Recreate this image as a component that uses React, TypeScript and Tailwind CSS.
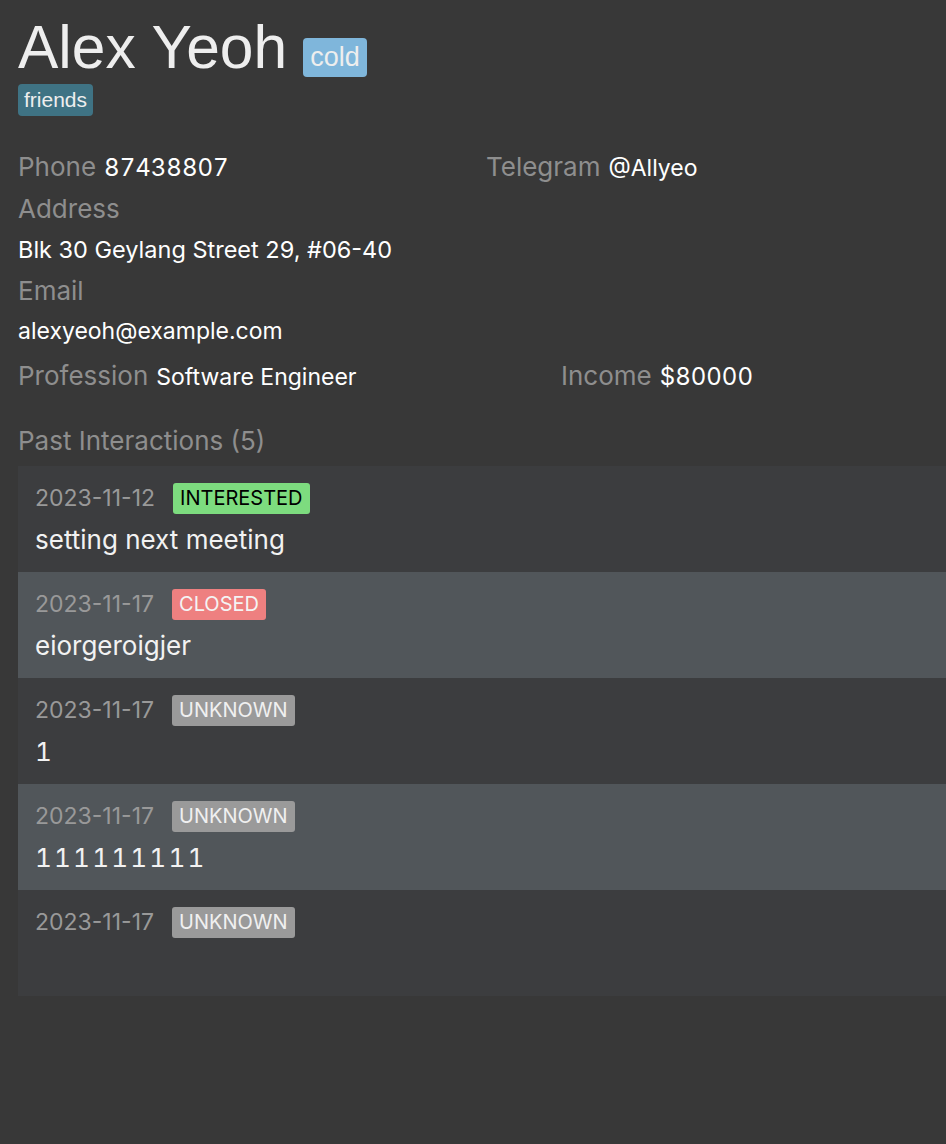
import React from "react";

const interactions = [
  { date: "2023-11-12", status: "INTERESTED", note: "setting next meeting" },
  { date: "2023-11-17", status: "CLOSED", note: "eiorgeroigjer" },
  { date: "2023-11-17", status: "UNKNOWN", note: "1" },
  { date: "2023-11-17", status: "UNKNOWN", note: "111111111" },
  { date: "2023-11-17", status: "UNKNOWN", note: "" },
];

const badgeStyle: Record<string, string> = {
  INTERESTED: "bg-[#7ddc7f] text-black",
  CLOSED: "bg-[#ee8080] text-[#f4f4f4]",
  UNKNOWN: "bg-[#9a9a9a] text-[#f0f0f0]",
};

export default function App() {
  return (
    <div className="min-h-[1144px] w-[946px] overflow-hidden bg-[#383838] font-['Inter',sans-serif]">
      <div className="pl-[18px] pt-[14px]">
        <div className="flex items-end gap-[16px] h-[66px]">
          <h1 className="font-['Liberation_Sans',Arial,sans-serif] text-[60.5px] leading-[66px] text-[#eeeeee]">
            Alex Yeoh
          </h1>
          <span className="mb-[3px] rounded-[4px] bg-[#7fb6db] px-[7px] font-['Liberation_Sans',Arial,sans-serif] text-[27px] leading-[39px] text-[#eeeeee]">
            cold
          </span>
        </div>
        <div className="mt-[4px] flex">
          <span className="rounded-[4px] bg-[#3f7384] px-[6px] font-['Liberation_Sans',Arial,sans-serif] text-[21px] leading-[32px] text-[#eeeeee]">
            friends
          </span>
        </div>

        <div className="mt-[28px] grid grid-cols-[468px_1fr] h-[44px] items-center">
          <div className="flex items-baseline gap-[8px]">
            <span className="text-[26px] text-[#8e8e8e]">Phone</span>
            <span className="text-[24px] tabular-nums text-white">87438807</span>
          </div>
          <div className="flex items-baseline gap-[8px]">
            <span className="text-[26px] text-[#8e8e8e]">Telegram</span>
            <span className="text-[23px] text-white">@Allyeo</span>
          </div>
        </div>
        <div className="h-[41px] flex items-center text-[26px] text-[#8e8e8e]">Address</div>
        <div className="h-[41px] flex items-center text-[23.5px] text-white">Blk 30 Geylang Street 29, #06-40</div>
        <div className="h-[41px] flex items-center text-[26px] text-[#8e8e8e]">Email</div>
        <div className="h-[41px] flex items-center text-[23px] text-white">alexyeoh@example.com</div>
        <div className="grid grid-cols-[543px_1fr] h-[46px] items-center">
          <div className="flex items-baseline gap-[8px]">
            <span className="text-[26px] text-[#8e8e8e]">Profession</span>
            <span className="text-[23px] text-white">Software Engineer</span>
          </div>
          <div className="flex items-baseline gap-[8px]">
            <span className="text-[26px] text-[#8e8e8e]">Income</span>
            <span className="text-[24px] tabular-nums text-white">$80000</span>
          </div>
        </div>

        <div className="mt-[20px] mb-[4px] h-[44px] flex items-center text-[26px] text-[#8e8e8e]">
          Past Interactions (5)
        </div>

        <div className="flex flex-col">
          {interactions.map((it, i) => (
            <div
              key={i}
              className={`h-[106px] pl-[17px] pt-[2px] ${i % 2 === 0 ? "bg-[#3c3d3f]" : "bg-[#51565a]"}`}
            >
              <div className="flex h-[60px] items-center gap-[18px]">
                <span className="text-[23px] text-[#999999]">{it.date}</span>
                <span className={`rounded-[3px] px-[7px] text-[20px] leading-[31px] ${badgeStyle[it.status]}`}>
                  {it.status}
                </span>
              </div>
              <div
                className={`-mt-[4px] text-[26px] leading-[32px] text-[#f2f2f2] ${
                  /^\d+$/.test(it.note) ? "tabular-nums tracking-[2.2px]" : ""
                }`}
              >
                {it.note}
              </div>
            </div>
          ))}
        </div>
      </div>
    </div>
  );
}
